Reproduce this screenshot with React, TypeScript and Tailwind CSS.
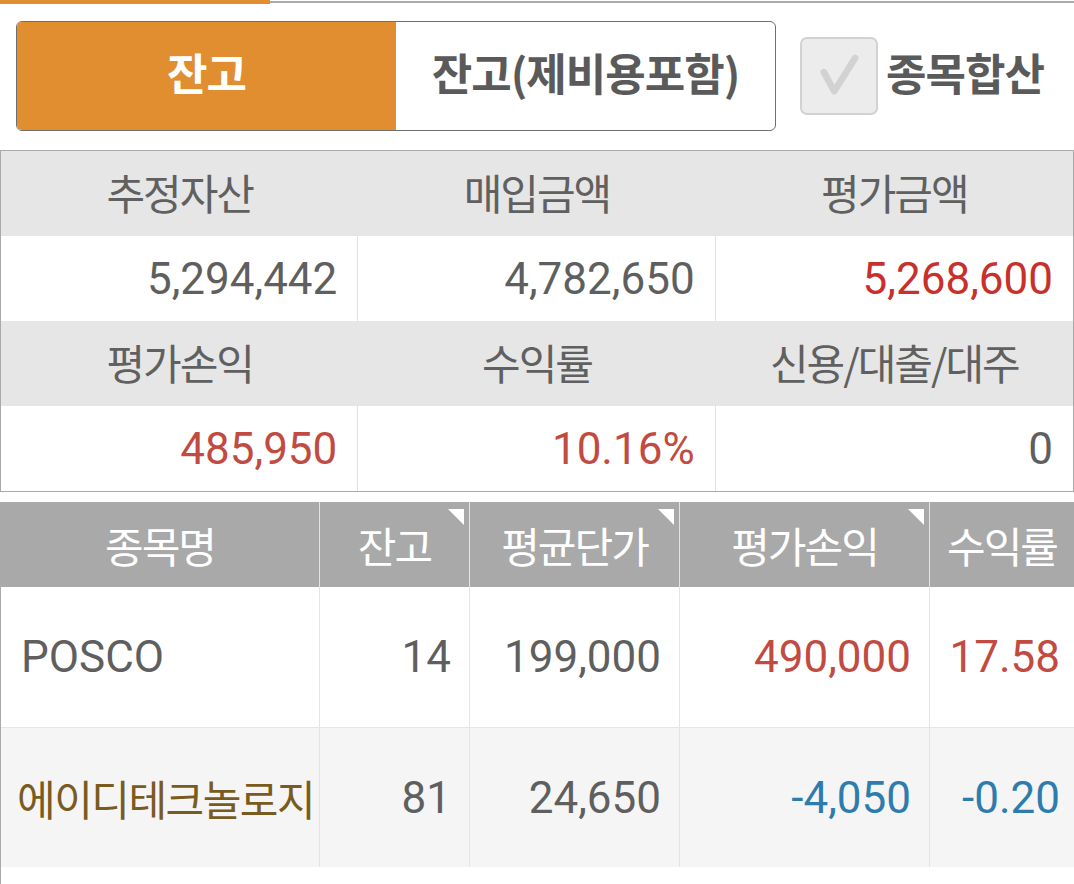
import { ReactNode } from 'react';

const kr = "font-['Noto_Sans_CJK_KR',sans-serif]";
const num = "font-['Roboto','Noto_Sans_CJK_KR',sans-serif]";

function Corner() {
    return <span className="absolute top-[7px] right-[5px] h-0 w-0 border-l-[16px] border-t-[16px] border-l-transparent border-t-white"></span>;
}

function HeadCell({ children, corner }: { children: ReactNode; corner?: boolean }) {
    return (
        <div className={`relative flex items-center justify-center text-[42px] tracking-[-2px] text-white ${kr}`}>
            {children}
            {corner && <Corner />}
        </div>
    );
}

function NumCell({ children, color = 'text-[#5f5f5f]', pad = 'pr-[18px]' }: { children: ReactNode; color?: string; pad?: string }) {
    return <div className={`flex items-center justify-end text-[44px] ${pad} ${color} ${num}`}>{children}</div>;
}

export default function App() {
    const summary = [
        [
            ['추정자산', '5,294,442', 'text-[#5f5f5f]'],
            ['매입금액', '4,782,650', 'text-[#5f5f5f]'],
            ['평가금액', '5,268,600', 'text-[#c8302c]'],
        ],
        [
            ['평가손익', '485,950', 'text-[#c24b41]'],
            ['수익률', '10.16%', 'text-[#c24b41]'],
            ['신용/대출/대주', '0', 'text-[#5f5f5f]'],
        ],
    ];

    return (
        <div className="flex h-[884px] w-[1074px] flex-col overflow-hidden bg-white">
            {/* tab indicator */}
            <div className="flex h-[4px] items-start">
                <div className="h-[4px] w-[270px] bg-[#e08e2f]"></div>
                <div className="mt-[1px] h-[2px] flex-1 bg-[#ababab]"></div>
            </div>

            {/* segmented + checkbox */}
            <div className="mt-[17px] flex items-center pl-4">
                <div className="flex h-[110px] w-[760px] overflow-hidden rounded-[6px] border border-[#6f6f6f]">
                    <div className={`flex w-[379px] items-center justify-center bg-[#e08e2f] pb-2 text-[44px] font-bold tracking-[-1px] text-white ${kr}`}>잔고</div>
                    <div className={`flex flex-1 items-center justify-center pb-2 text-[44px] font-bold tracking-[-1px] text-[#5a5a5a] ${kr}`}>잔고(제비용포함)</div>
                </div>
                <div className="ml-6 flex h-[78px] w-[78px] items-center justify-center rounded-[7px] border-2 border-[#d2d2d2] bg-[#ececec]">
                    <svg width="78" height="78" viewBox="0 0 78 78" fill="none">
                        <path d="M23 35 L34 55 L56 20" stroke="#d2d2d2" strokeWidth="7" strokeLinecap="round" strokeLinejoin="round" />
                    </svg>
                </div>
                <span className={`ml-2 pb-2 text-[44px] font-bold tracking-[-1px] text-[#5a5a5a] ${kr}`}>종목합산</span>
            </div>

            {/* summary */}
            <div className="mt-[19px] border border-[#aaaaaa]">
                {summary.map((row, i) => (
                    <div key={i}>
                        <div className="grid h-[85px] grid-cols-3 bg-[#e6e6e6]">
                            {row.map(([label]) => (
                                <div key={label} className={`flex items-center justify-center pb-1 text-[42px] tracking-[-2px] text-[#606060] ${kr}`}>{label}</div>
                            ))}
                        </div>
                        <div className="grid h-[85px] grid-cols-3 divide-x divide-[#e2e2e2] bg-white">
                            {row.map(([label, value, color]) => (
                                <NumCell key={label} color={color} pad="pr-[20px]">{value}</NumCell>
                            ))}
                        </div>
                    </div>
                ))}
            </div>

            {/* holdings */}
            <div className="mt-[10px] flex-1 border-l border-[#aaaaaa]">
                <div className="grid h-[85px] grid-cols-[319px_150px_210px_250px_1fr] divide-x divide-[#e4e4e4] bg-[#a9a9a9]">
                    <HeadCell>종목명</HeadCell>
                    <HeadCell corner>잔고</HeadCell>
                    <HeadCell corner>평균단가</HeadCell>
                    <HeadCell corner>평가손익</HeadCell>
                    <HeadCell>수익률</HeadCell>
                </div>
                <div className="grid h-[140px] grid-cols-[319px_150px_210px_250px_1fr] divide-x divide-[#e4e4e4] bg-white">
                    <div className={`flex items-center pl-[20px] text-[44px] text-[#5f5f5f] ${num}`}>POSCO</div>
                    <NumCell>14</NumCell>
                    <NumCell>199,000</NumCell>
                    <NumCell color="text-[#c24b41]">490,000</NumCell>
                    <NumCell color="text-[#c24b41]" pad="pr-[14px]">17.58</NumCell>
                </div>
                <div className="grid h-[140px] grid-cols-[319px_150px_210px_250px_1fr] divide-x divide-[#e4e4e4] border-t border-[#e6e6e6] bg-[#f5f5f5]">
                    <div className={`flex items-center pl-[16px] text-[42px] tracking-[-1.5px] text-[#7a5b1f] ${kr}`}>에이디테크놀로지</div>
                    <NumCell>81</NumCell>
                    <NumCell>24,650</NumCell>
                    <NumCell color="text-[#2e7cae]">-4,050</NumCell>
                    <NumCell color="text-[#2e7cae]" pad="pr-[14px]">-0.20</NumCell>
                </div>
            </div>
        </div>
    );
}
